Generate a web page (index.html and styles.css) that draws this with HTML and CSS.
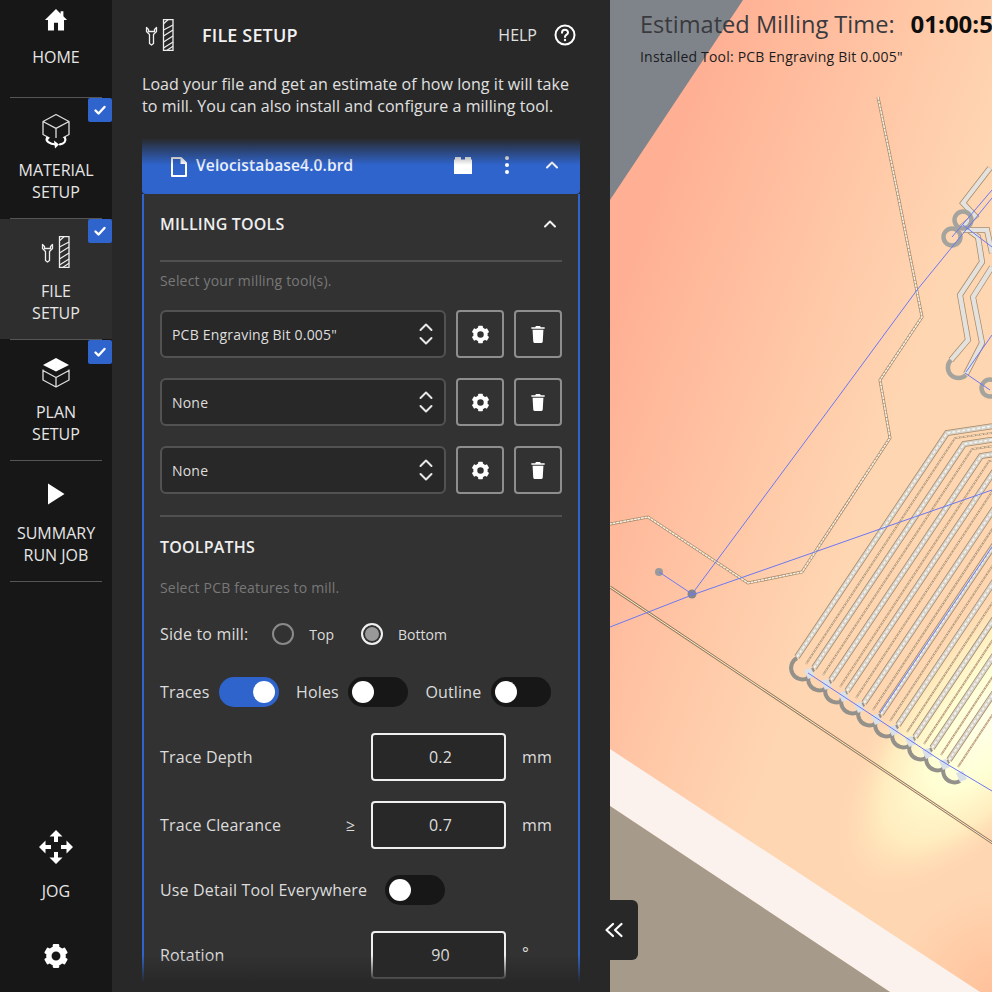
FILE: index.html
```html
<!DOCTYPE html>
<html lang="en">
<head>
<meta charset="utf-8">
<title>File Setup</title>
<link rel="stylesheet" href="styles.css">
</head>
<body>
<svg class="defs" width="0" height="0" aria-hidden="true">
  <defs>
    <symbol id="i-gear" viewBox="0 0 24 24">
      <circle cx="12" cy="12" r="6.6" fill="none" stroke="#fff" stroke-width="5"/>
      <g fill="#fff">
        <rect x="9" y="1" width="6" height="5" rx="1"/>
        <rect x="9" y="1" width="6" height="5" rx="1" transform="rotate(60 12 12)"/>
        <rect x="9" y="1" width="6" height="5" rx="1" transform="rotate(120 12 12)"/>
        <rect x="9" y="1" width="6" height="5" rx="1" transform="rotate(180 12 12)"/>
        <rect x="9" y="1" width="6" height="5" rx="1" transform="rotate(240 12 12)"/>
        <rect x="9" y="1" width="6" height="5" rx="1" transform="rotate(300 12 12)"/>
      </g>
    </symbol>
    <symbol id="i-trash" viewBox="0 0 24 24">
      <path fill="#fff" d="M9.5 2.5h5l.8 1.3H20v2H4v-2h4.700z"/>
      <path fill="#fff" d="M5.500 7h13l-.8 14a2 2 0 0 1-2 1.800H8.300a2 2 0 0 1-2-1.800z"/>
    </symbol>
    <symbol id="i-updown" viewBox="0 0 16 26">
      <path fill="none" stroke="#e8e8e8" stroke-width="2" stroke-linecap="round" stroke-linejoin="round" d="M2.500 9 8 3.500 13.500 9M2.500 17 8 22.500 13.500 17"/>
    </symbol>
    <symbol id="i-check" viewBox="0 0 24 24">
      <path fill="none" stroke="#fff" stroke-width="2.400" stroke-linecap="round" stroke-linejoin="round" d="M7.500 12.500l3 3 6-6.500"/>
    </symbol>
    <symbol id="i-chev" viewBox="0 0 16 16">
      <path fill="none" stroke="#f2f2f2" stroke-width="2" stroke-linecap="round" stroke-linejoin="round" d="M3 10.500 8 5.500l5 5"/>
    </symbol>
    <symbol id="i-tools" viewBox="0 0 30 32">
      <path fill="none" stroke="#eee" stroke-width="1.300" stroke-linejoin="round" d="M1.500 8.500v4l3 3v9l2 1.500 2-1.500v-9l3-3v-4l-2 2v2H3.500v-2z"/>
      <path fill="none" stroke="#eee" stroke-width="1.300" d="M18.500 .7h9.500v30.600h-9.500z"/>
      <path fill="none" stroke="#eee" stroke-width="1.200" d="M18.500 11l9.500-5M18.500 17l9.500-6M18.500 23l9.500-6M18.500 29l9.500-6M22 31.300l6-4M23 .7l-4.500 4"/>
    </symbol>
    <path id="t-long" d="M878,97 L899,200 L922,317 L880,380 L890,438 L802,572 L748,583 L648,517 L610,524"/>
    <path id="t-edge" d="M610,587 L1000,848"/>
    <path id="t-a" d="M951,360 L968,340 L960,295 L982,262 L978,237 L963,226 L975,216 L963,203 L990,168"/>
    <path id="t-b" d="M966,374 L982,343 L973,297 L992,267"/>
    <path id="t-c" d="M963,230 L987,230 L992,253"/>
    <g id="comb">
      <path class="st-o" d="M797,657 L947,433 L1100,410"/>
      <path class="st-i" d="M797,657 L947,433 L1100,410"/>
      <path class="st-d" d="M797,657 L947,433 L1100,410"/>
      <path class="th-o" d="M806,664 L955,438 L1100,418"/>
      <path class="th-i" d="M806,664 L955,438 L1100,418"/>
      <path class="bump" d="M797,658 A11,11 0 0 0 808,678"/>
      <path class="patch" d="M804,670 L811,668 L815,676 L808,679z"/>
    </g>
  </defs>
</svg>

<div class="app">
  <nav class="nav">
    <a class="nav-item nav-home">
      <span class="nav-icon">
        <svg width="24" height="24" viewBox="0 0 26 26"><path fill="#fff" d="M13 1 1 13h3.300v11.500h6.500V16h4.400v8.500h6.500V13H25l-4-4V3.500h-3v2.600z"/></svg>
      </span>
      <span class="nav-label">HOME</span>
    </a>
    <hr class="nav-rule">
    <a class="nav-item">
      <span class="nav-icon">
        <svg width="32" height="36" viewBox="0 0 32 36">
          <g fill="none" stroke="#ddd" stroke-width="1.300" stroke-linejoin="round"><path d="M16 1.500 29 8.500v13l-6 3.300M16 1.500 3 8.500v13l6 3.300M3 8.500l13 6.800 13-6.800M16 15.300V25"/></g>
          <g fill="none" stroke="#fff" stroke-width="2.200" stroke-linecap="round"><path d="M7 25c-1.500 3 2 6 9 6.500M25 25c1.500 3-1 5.800-5 6.300"/></g>
          <path fill="#fff" d="M14 27.500l5 4-4 4zM6 24l4 .5-2.500 3z"/>
        </svg>
      </span>
      <span class="nav-label">MATERIAL<br>SETUP</span>
      <span class="badge"><svg width="24" height="24"><use href="#i-check"/></svg></span>
    </a>
    <hr class="nav-rule">
    <a class="nav-item is-active">
      <span class="nav-icon"><svg width="30" height="32"><use href="#i-tools"/></svg></span>
      <span class="nav-label">FILE<br>SETUP</span>
      <span class="badge"><svg width="24" height="24"><use href="#i-check"/></svg></span>
    </a>
    <hr class="nav-rule">
    <a class="nav-item">
      <span class="nav-icon">
        <svg width="32" height="32" viewBox="0 0 32 32">
          <path fill="#fff" d="M16 1 29 8l-13 6.500L3 8z"/>
          <g fill="none" stroke="#ddd" stroke-width="1.300" stroke-linejoin="round"><path d="M3 12.500v10.500l13 7 13-7V12.500M3 13.500l13 7 13-7M16 20.500V30"/></g>
        </svg>
      </span>
      <span class="nav-label">PLAN<br>SETUP</span>
      <span class="badge"><svg width="24" height="24"><use href="#i-check"/></svg></span>
    </a>
    <hr class="nav-rule">
    <a class="nav-item">
      <span class="nav-icon"><svg width="18" height="22" viewBox="0 0 18 22"><path fill="#fff" d="M1 0.500 17.500 11 1 21.500z"/></svg></span>
      <span class="nav-label">SUMMARY<br>RUN JOB</span>
    </a>
    <hr class="nav-rule">
    <div class="nav-bottom">
      <a class="nav-jog">
        <svg width="36" height="36" viewBox="0 0 36 36" fill="#fff">
          <path d="M18 1l6.500 6.500h-4.500V13h-4V7.500h-4.500z"/>
          <path d="M18 35l6.500-6.500h-4.500V23h-4v5.500h-4.500z"/>
          <path d="M1 18l6.500-6.500v4.500H13v4H7.500v4.500z"/>
          <path d="M35 18l-6.500-6.500v4.500H23v4h5.500v4.500z"/>
        </svg>
        <span class="nav-label">JOG</span>
      </a>
      <a class="nav-settings"><svg width="26" height="26"><use href="#i-gear"/></svg></a>
    </div>
  </nav>

  <section class="panel">
    <header class="panel-head">
      <svg class="panel-icon" width="30" height="32"><use href="#i-tools"/></svg>
      <h1 class="panel-title">FILE SETUP</h1>
      <span class="help">HELP</span>
      <svg class="help-icon" width="22" height="22" viewBox="0 0 22 22">
        <circle cx="11" cy="11" r="9.500" fill="none" stroke="#fff" stroke-width="2"/>
        <path fill="none" stroke="#fff" stroke-width="2" stroke-linecap="round" d="M8 8.700A3 3 0 0 1 14 8.700c0 2-3 2-3 4.300"/>
        <circle cx="11" cy="16" r="1.200" fill="#fff"/>
      </svg>
    </header>
    <p class="panel-desc">Load your file and get an estimate of how long it will take to mill. You can also install and configure a milling tool.</p>

    <div class="scroll">
      <div class="card">
        <div class="card-head">
          <svg class="file-icon" width="18" height="22" viewBox="0 0 18 22"><path fill="none" stroke="#fff" stroke-width="2" stroke-linejoin="round" d="M2 2h9l5 5v13H2z"/><path fill="#fff" d="M10.500 2h1l4.500 5v1h-5.500z"/></svg>
          <span class="file-name">Velocistabase4.0.brd</span>
          <svg class="brick" width="18" height="18" viewBox="0 0 18 18"><path fill="#fff" d="M0 3.500h1V1h6v2.500h4V1h6v2.500h1V18H0z"/></svg>
          <svg class="kebab" width="4" height="20" viewBox="0 0 4 20" fill="#fff"><circle cx="2" cy="3" r="2"/><circle cx="2" cy="10" r="2"/><circle cx="2" cy="17" r="2"/></svg>
          <svg class="card-chev" width="16" height="16"><use href="#i-chev"/></svg>
        </div>
        <div class="card-body">
          <div class="section-head">
            <h2 class="section-title">MILLING TOOLS</h2>
            <svg width="16" height="16"><use href="#i-chev"/></svg>
          </div>
          <div class="rule"></div>
          <p class="hint hint-first">Select your milling tool(s).</p>
          <div class="tool-rows">
            <div class="tool-row">
              <div class="select"><span>PCB Engraving Bit 0.005"</span><svg width="16" height="26"><use href="#i-updown"/></svg></div>
              <button class="icon-btn"><svg width="19" height="19"><use href="#i-gear"/></svg></button>
              <button class="icon-btn"><svg width="20" height="22"><use href="#i-trash"/></svg></button>
            </div>
            <div class="tool-row">
              <div class="select"><span>None</span><svg width="16" height="26"><use href="#i-updown"/></svg></div>
              <button class="icon-btn"><svg width="19" height="19"><use href="#i-gear"/></svg></button>
              <button class="icon-btn"><svg width="20" height="22"><use href="#i-trash"/></svg></button>
            </div>
            <div class="tool-row">
              <div class="select"><span>None</span><svg width="16" height="26"><use href="#i-updown"/></svg></div>
              <button class="icon-btn"><svg width="19" height="19"><use href="#i-gear"/></svg></button>
              <button class="icon-btn"><svg width="20" height="22"><use href="#i-trash"/></svg></button>
            </div>
          </div>
          <div class="rule rule-gap"></div>
          <div class="section-head">
            <h2 class="section-title">TOOLPATHS</h2>
          </div>
          <p class="hint hint-second">Select PCB features to mill.</p>
          <div class="radio-row">
            <span class="label">Side to mill:</span>
            <span class="radio"></span><span class="radio-text">Top</span>
            <span class="radio is-on"></span><span class="radio-text">Bottom</span>
          </div>
          <div class="toggle-row">
            <span class="label">Traces</span><span class="toggle is-on"></span>
            <span class="label">Holes</span><span class="toggle"></span>
            <span class="label">Outline</span><span class="toggle"></span>
          </div>
          <div class="field field-first">
            <span class="label">Trace Depth</span>
            <div class="input">0.2</div>
            <span class="unit">mm</span>
          </div>
          <div class="field field-next">
            <span class="label label-ge">Trace Clearance<span class="ge">≥</span></span>
            <div class="input">0.7</div>
            <span class="unit">mm</span>
          </div>
          <div class="toggle-row toggle-detail">
            <span class="label">Use Detail Tool Everywhere</span><span class="toggle"></span>
          </div>
          <div class="field field-rot">
            <span class="label">Rotation</span>
            <div class="input">90</div>
            <span class="unit unit-deg">°</span>
          </div>
        </div>
      </div>
    </div>
  </section>

  <main class="stage">
    <svg class="scene" width="382" height="992" viewBox="610 0 382 992">
      <defs>
        <linearGradient id="g-board" gradientUnits="userSpaceOnUse" x1="620" y1="300" x2="900" y2="400">
          <stop offset="0" stop-color="#ffb094"/>
          <stop offset="1" stop-color="#ffd6b2"/>
        </linearGradient>
        <radialGradient id="g-hot" gradientUnits="userSpaceOnUse" cx="0" cy="0" r="1" gradientTransform="translate(995 715) rotate(-50) scale(225 95)">
          <stop offset="0" stop-color="#ffffea"/>
          <stop offset=".4" stop-color="#ffffd4"/>
          <stop offset=".7" stop-color="#fff2c2" stop-opacity=".8"/>
          <stop offset="1" stop-color="#ffd8b0" stop-opacity="0"/>
        </radialGradient>
        <radialGradient id="g-warm" gradientUnits="userSpaceOnUse" cx="1000" cy="1000" r="110">
          <stop offset="0" stop-color="#ffbf98"/>
          <stop offset="1" stop-color="#ffbf98" stop-opacity="0"/>
        </radialGradient>
      </defs>
      <rect x="610" y="0" width="382" height="992" fill="url(#g-board)"/>
      <rect x="610" y="0" width="382" height="992" fill="url(#g-hot)"/>
      <rect x="610" y="0" width="382" height="992" fill="url(#g-warm)"/>
      <path fill="#7f848b" d="M610 0H743L610 200z"/>
      <path fill="#fbf2ee" d="M610 749 980 992H890L610 806z"/>
      <path fill="#a69a8a" d="M610 806 890 992H610z"/>

      <use href="#t-long" class="tr-o"/><use href="#t-long" class="tr-i"/>
      <use href="#t-edge" class="tr-o tr-thin"/><use href="#t-edge" class="tr-i tr-thinner"/>

      <g>
        <use href="#comb" transform="translate(152 103)"/>
        <use href="#comb" transform="translate(135 91)"/>
        <use href="#comb" transform="translate(118 80)"/>
        <use href="#comb" transform="translate(101 68)"/>
        <use href="#comb" transform="translate(84 57)"/>
        <use href="#comb" transform="translate(67 46)"/>
        <use href="#comb" transform="translate(50 34)"/>
        <use href="#comb" transform="translate(34 23)"/>
        <use href="#comb" transform="translate(17 11)"/>
        <use href="#comb"/>
      </g>

      <use href="#t-a" class="pad-o"/><use href="#t-a" class="pad-i"/>
      <use href="#t-b" class="pad-o"/><use href="#t-b" class="pad-i"/>
      <use href="#t-c" class="pad-o"/><use href="#t-c" class="pad-i"/>
      <circle cx="952" cy="237" r="8.500" class="ring"/>
      <circle cx="963" cy="220" r="8.500" class="ring"/>
      <path d="M951,360 A10,10 0 1 0 966,375" class="ring"/>
      <circle cx="990" cy="388" r="8.500" class="ring"/>

      <circle cx="659" cy="572" r="4" fill="#9a9a9c"/>
      <circle cx="692" cy="594" r="4.500" fill="#858688"/>
      <g class="net">
        <path d="M692,594 L836,400 L917,290 L992,198"/>
        <path d="M610,627 L692,595 L812,553 L883,528 L992,490"/>
        <path d="M659,572 L692,594"/>
        <path d="M808,673 L940,760 L992,791"/>
        <path d="M880,713 L992,547"/>
        <path d="M965,373 L990,390"/>
        <path d="M966,372 L992,335"/>
        <path d="M952,237 L992,190"/>
        <path d="M963,225 L992,247"/>
      </g>
    </svg>
    <div class="readout">
      <div class="time-row"><span class="time-label">Estimated Milling Time:</span><strong class="time-value">01:00:5</strong></div>
      <div class="tool-note">Installed Tool: PCB Engraving Bit 0.005"</div>
    </div>
    <button class="collapse">
      <svg width="20" height="16" viewBox="0 0 20 16"><path fill="none" stroke="#fff" stroke-width="2.200" stroke-linecap="round" stroke-linejoin="round" d="M9 2 2.500 8 9 14M17.500 2 11 8l6.500 6"/></svg>
    </button>
  </main>
</div>
</body>
</html>
```

FILE: styles.css
```css
* { box-sizing: border-box; }
html, body { margin: 0; padding: 0; height: 100%; overflow: hidden; }
body { font-family: "Open Sans", "Liberation Sans", sans-serif; font-size: 16px; color: #e4e4e4; background: #171717; }
.defs { position: absolute; }
.app { display: flex; width: 992px; height: 992px; overflow: hidden; }

/* side navigation */
.nav { width: 112px; flex: none; background: #171717; display: flex; flex-direction: column; }
.nav-item { position: relative; height: 120px; padding-top: 17px; display: flex; flex-direction: column; align-items: center; }
.nav-home { height: 97px; padding-top: 4px; }
.nav-item.is-active { background: #2e2e2e; }
.nav-icon { height: 32px; margin-bottom: 12px; display: flex; align-items: center; justify-content: center; }
.nav-home .nav-icon { margin-bottom: 10px; }
.nav-label { font-size: 16px; line-height: 22px; text-align: center; color: #e6e6e6; }
.nav-rule { margin: 0 10px; height: 1px; border: 0; background: #555; flex: none; }
.badge { position: absolute; top: 0; right: 0; width: 24px; height: 24px; background: #2f64cc; border-radius: 2px; }
.badge svg { display: block; }
.nav-bottom { margin-top: auto; display: flex; flex-direction: column; align-items: center; padding-bottom: 23px; }
.nav-jog { display: flex; flex-direction: column; align-items: center; }
.nav-jog svg { margin-bottom: 15px; }
.nav-settings { margin-top: 41px; height: 26px; }
.nav-settings svg { display: block; }

/* panel */
.panel { width: 498px; flex: none; background: #282828; display: flex; flex-direction: column; padding: 0 30px; }
.panel-head { height: 70px; flex: none; display: flex; align-items: center; }
.panel-icon { margin-left: 3px; margin-right: 27px; }
.panel-title { margin: 0; font-size: 18px; font-weight: 600; letter-spacing: .15px; color: #f2f2f2; flex: 1; }
.help { font-size: 16px; color: #e0e0e0; margin-right: 17px; }
.help-icon { margin-right: 4px; }
.panel-desc { margin: 3px 0 21px; font-size: 16px; line-height: 22px; letter-spacing: .06px; color: #e0e0e0; flex: none; }

.scroll { position: relative; flex: 1; min-height: 0; overflow: hidden; }
.scroll::before, .scroll::after { content: ""; position: absolute; left: 0; right: 0; pointer-events: none; z-index: 2; }
.scroll::before { top: 0; height: 27px; background: linear-gradient(#282828, rgba(40,40,40,0)); }
.scroll::after { bottom: 0; height: 37px; background: linear-gradient(rgba(40,40,40,0), #282828 75%); }

.card { width: 438px; }
.card-head { height: 56px; background: #2f64cc; border-radius: 0 0 4px 4px; padding: 0 20px 2px 28px; display: flex; align-items: center; }
.card-head > svg { flex: none; }
.file-icon { margin-right: 8px; margin-top: 4px; }
.file-name { font-size: 15.5px; font-weight: 600; letter-spacing: .15px; color: #eef2fb; flex: 1; }
.brick { margin-right: 33px; margin-top: -1px; }
.kebab { margin-right: 35px; }
.card-body { background: #323232; border-left: 2px solid #2f64cc; border-right: 2px solid #2f64cc; padding: 0 16px; height: 820px; }

.section-head { height: 60px; display: flex; align-items: center; justify-content: space-between; padding-right: 4px; }
.section-title { margin: 0; font-size: 16px; font-weight: 600; letter-spacing: .2px; color: #eeeeee; }
.rule { height: 2px; background: #505050; margin-top: 6px; }
.rule-gap { margin-top: 21px; }
.hint { margin: 0; font-size: 14px; line-height: 20px; letter-spacing: .18px; color: #787878; }
.hint-first { margin: 9px 0 19px; }
.hint-second { margin-top: 1px; }

.tool-rows { display: flex; flex-direction: column; gap: 20px; }
.tool-row { display: flex; height: 48px; gap: 10px; }
.select { flex: 1; background: #282828; border: 2px solid #525252; border-radius: 6px; padding: 0 10px; display: flex; align-items: center; justify-content: space-between; font-size: 14px; letter-spacing: .2px; color: #dedede; }
.icon-btn { width: 48px; height: 48px; flex: none; padding: 0; background: transparent; border: 2px solid #8e8e8e; border-radius: 4px; display: flex; align-items: center; justify-content: center; }

.label { font-size: 16px; letter-spacing: .15px; color: #dcdcdc; }
.radio-row { margin-top: 21px; height: 30px; display: flex; align-items: center; }
.radio { width: 22px; height: 22px; border: 2px solid #8a8a8a; border-radius: 50%; flex: none; margin-left: 24px; }
.radio + .radio-text { margin-left: 15px; font-size: 14px; color: #dcdcdc; }
.radio-text + .radio { margin-left: 27px; }
.radio.is-on { border-color: #f0f0f0; background: #999; box-shadow: inset 0 0 0 2px #323232; }

.toggle-row { margin-top: 28px; height: 30px; display: flex; align-items: center; }
.toggle { position: relative; width: 60px; height: 30px; border-radius: 15px; background: #171717; margin-left: 9.6px; margin-right: 17px; flex: none; }
.toggle::after { content: ""; position: absolute; top: 4px; left: 4px; width: 22px; height: 22px; border-radius: 50%; background: #fff; }
.toggle.is-on { background: #2f64cc; }
.toggle.is-on::after { left: 34px; }
.toggle-detail { margin-top: 26px; }
.toggle-detail .toggle { margin-left: 18px; }

.field { display: grid; grid-template-columns: 211px 135px auto; align-items: center; height: 48px; }
.field-first { margin-top: 26px; }
.field-next { margin-top: 20px; }
.field-rot { margin-top: 26px; }
.label-ge { display: flex; justify-content: space-between; padding-right: 16px; }
.ge { font-size: 16px; }
.input { height: 48px; padding-left: 4px; background: #282828; border: 2px solid #efefef; border-radius: 4px; display: flex; align-items: center; justify-content: center; font-size: 16px; letter-spacing: .15px; color: #dedede; }
.unit { margin-left: 16px; font-size: 16px; letter-spacing: .15px; color: #dcdcdc; }
.unit-deg { margin-top: -4px; }

/* 3D stage */
.stage { position: relative; flex: 1; background: #ffc8a4; }
.scene { position: absolute; inset: 0; display: block; }
.tr-o { fill: none; stroke: #a98a66; stroke-width: 3; }
.tr-i { fill: none; stroke: #f8f1e8; stroke-width: 1.500; stroke-dasharray: 3 .6; }
.tr-thin { stroke: #9b7a52; stroke-width: 2.800; }
.tr-thinner { stroke-width: 1; stroke-dasharray: none; }
.pad-o { fill: none; stroke: #a98a66; stroke-width: 6; }
.pad-i { fill: none; stroke: #e4e2de; stroke-width: 4.500; }
.st-o { fill: none; stroke: #a98a66; stroke-width: 6; }
.st-i { fill: none; stroke: #d6d3cc; stroke-width: 4.500; }
.st-d { fill: none; stroke: #f8f6f0; stroke-width: 1.500; stroke-dasharray: 3 2; }
.th-o { fill: none; stroke: #b0906c; stroke-width: 1.800; }
.th-i { fill: none; stroke: #fff0dc; stroke-width: .8; stroke-dasharray: 3 1; }
.bump { fill: none; stroke: #94918b; stroke-width: 4; }
.patch { fill: #d9e0e8; }
.ring { fill: none; stroke: #a5a39e; stroke-width: 4.500; }
.net path { fill: none; stroke: #6c78f2; stroke-width: 1; }

.readout { position: relative; padding: 10px 0 0 30px; white-space: nowrap; }
.time-row { display: flex; align-items: baseline; height: 28px; line-height: 28px; }
.time-label { font-size: 23.6px; color: #3a3a3e; }
.time-value { margin-left: 16px; font-size: 24px; font-weight: 700; color: #0e0e0e; }
.tool-note { margin-top: 9px; font-size: 14px; line-height: 20px; letter-spacing: .2px; color: #1c1c20; }
.collapse { position: absolute; left: -20px; top: 900px; width: 48px; height: 60px; padding: 0; border: 0; background: #282828; border-radius: 0 6px 6px 0; display: flex; align-items: center; justify-content: center; }
```
